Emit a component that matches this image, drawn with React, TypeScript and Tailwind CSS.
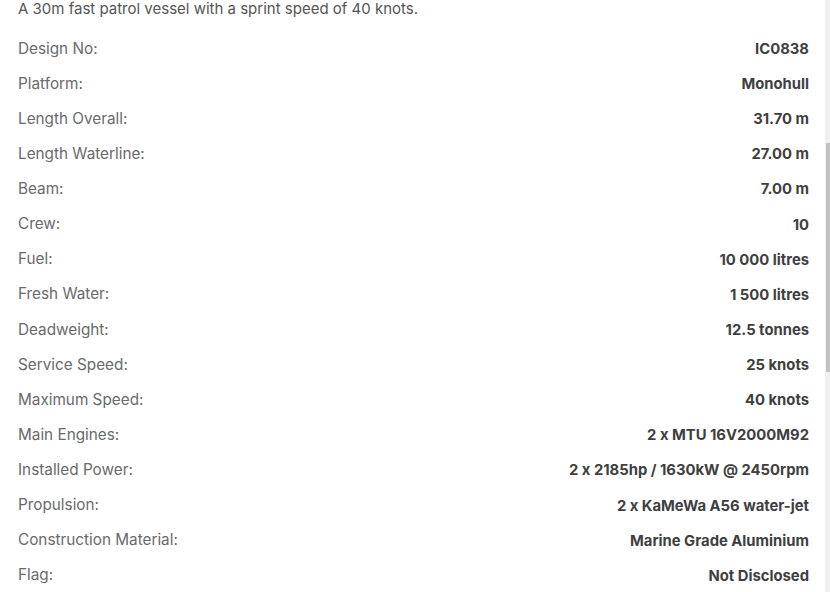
import React from 'react';

const specs: [string, string][] = [
  ['Design No:', 'IC0838'],
  ['Platform:', 'Monohull'],
  ['Length Overall:', '31.70 m'],
  ['Length Waterline:', '27.00 m'],
  ['Beam:', '7.00 m'],
  ['Crew:', '10'],
  ['Fuel:', '10 000 litres'],
  ['Fresh Water:', '1 500 litres'],
  ['Deadweight:', '12.5 tonnes'],
  ['Service Speed:', '25 knots'],
  ['Maximum Speed:', '40 knots'],
  ['Main Engines:', '2 x MTU 16V2000M92'],
  ['Installed Power:', '2 x 2185hp / 1630kW @ 2450rpm'],
  ['Propulsion:', '2 x KaMeWa A56 water-jet'],
  ['Construction Material:', 'Marine Grade Aluminium'],
  ['Flag:', 'Not Disclosed'],
];

export default function App() {
  return (
    <div className="flex h-[592px] w-[830px] overflow-hidden bg-white font-['Inter',sans-serif] [font-feature-settings:'calt'_0]">
      <div className="flex-1 pl-[18px] pr-[16px]">
        <p className="h-[17px] leading-[17px] text-[15px] text-[#555]">
          A 30m fast patrol vessel with a sprint speed of 40 knots.
        </p>
        <div className="mt-[14.5px]">
          {specs.map(([label, value]) => (
            <div key={label} className="flex h-[35.13px] items-center justify-between">
              <span className="text-[15.3px] text-[#6a6a6a]">{label}</span>
              <span className="text-[14.8px] font-bold text-[#3f3f3f]">{value}</span>
            </div>
          ))}
        </div>
      </div>
      <div className="w-[5px] bg-[#f0f0f0]">
        <div className="ml-[1px] mt-[143px] h-[229px] bg-[#c1c1c1]" />
      </div>
    </div>
  );
}
